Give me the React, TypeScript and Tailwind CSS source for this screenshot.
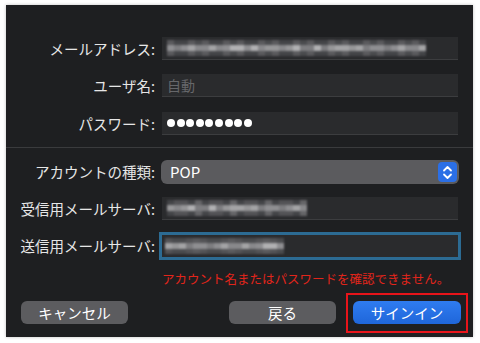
import React from "react";

interface RowProps {
    label: string;
    children: React.ReactNode;
    className?: string;
}

function Row(props: RowProps) {
    return (
        <div className={`flex items-center ${props.className ?? ""}`}>
            <div className="w-[156px] shrink-0 pr-[7px] text-right text-[14.5px] text-[#e6e6e6]">
                {props.label}
            </div>
            {props.children}
        </div>
    );
}

function Field({ children }: { children?: React.ReactNode }) {
    return (
        <div className="relative flex h-[23px] w-[296px] items-center overflow-hidden border-b border-[#3c3d3f] bg-[#2a2b2d] pl-[5px]">
            {children}
        </div>
    );
}

const lightShades = [
    "bg-[#8e8e91]",
    "bg-[#a3a3a5]",
    "bg-[#7d7d80]",
    "bg-[#969698]",
    "bg-[#b0b0b2]",
    "bg-[#88888b]",
];

const darkShades = [
    "bg-[#4a4b4e]",
    "bg-[#5a5a5d]",
    "bg-[#535356]",
    "bg-[#656568]",
    "bg-[#444548]",
];

// pixelated stand-in for hidden text
function Mosaic({ cols, seed }: { cols: number; seed: number }) {
    const rows = [0, 1, 2];
    return (
        <div className="flex flex-col blur-[0.8px]">
            {rows.map((r) => (
                <div key={r} className="flex">
                    {Array.from({ length: cols }).map((_, c) => {
                        const k = c * 7 + r * 5 + seed + ((c * c) % 5);
                        const cls = r === 1 ? lightShades[k % lightShades.length] : darkShades[k % darkShades.length];
                        return <div key={c} className={`w-[7px] ${r === 1 ? "h-[6px]" : "h-[5px]"} ${cls}`} />;
                    })}
                </div>
            ))}
        </div>
    );
}

export default function App() {
    return (
        <div
            className="h-[343px] w-[480px] bg-white pl-[6px] pt-[5px]"
            style={{ fontFamily: '"Noto Sans CJK JP", "Noto Sans", sans-serif' }}
        >
            <div className="flex h-[332px] w-[467px] flex-col bg-[#1e1f21] shadow-[0_0_3px_rgba(0,0,0,0.25)]">
                <Row label="メールアドレス:" className="mt-[32px]">
                    <Field>
                        <Mosaic cols={37} seed={1} />
                    </Field>
                </Row>
                <Row label="ユーザ名:" className="mt-[14px]">
                    <Field>
                        <span className="text-[14px] text-[#66676a]">自動</span>
                    </Field>
                </Row>
                <Row label="パスワード:" className="mt-[15px]">
                    <Field>
                        <div className="flex gap-[1.6px]">
                            {Array.from({ length: 9 }).map((_, i) => (
                                <div key={i} className="h-[8px] w-[8px] rounded-full bg-white" />
                            ))}
                        </div>
                    </Field>
                </Row>

                <div className="mt-[12px] h-px w-full bg-[#3a3b3d]" />

                <Row label="アカウントの種類:" className="mt-[12px]">
                    <div className="-ml-[1px] flex h-[24px] w-[298px] items-center justify-between rounded-[6px] bg-[#5b5b5e] pl-[9px] pr-[2px]">
                        <span className="text-[15px] text-white">POP</span>
                        <div className="flex h-[20px] w-[19px] items-center justify-center rounded-[4px] bg-[#2b6fe6]">
                            <svg width="11" height="15" viewBox="0 0 11 15" fill="none" stroke="white" strokeWidth="1.8" strokeLinecap="round" strokeLinejoin="round">
                                <path d="M2 5.5L5.5 2L9 5.5" />
                                <path d="M2 9.5L5.5 13L9 9.5" />
                            </svg>
                        </div>
                    </div>
                </Row>
                <Row label="受信用メールサーバ:" className="mt-[13px]">
                    <Field>
                        <Mosaic cols={20} seed={4} />
                    </Field>
                </Row>
                <Row label="送信用メールサーバ:" className="mt-[12px]">
                    <div className="-ml-[3px] flex h-[28px] w-[302px] items-center border-[3px] border-[#2c6b93] bg-[#2a2b2d] pl-[3px]">
                        <Mosaic cols={17} seed={2} />
                    </div>
                </Row>

                <div className="mt-[10px] pl-[156px] text-[12.5px] text-[#e2251b]">
                    アカウント名またはパスワードを確認できません。
                </div>

                <div className="mt-[4px] flex items-center pl-[15px]">
                    <button className="h-[23px] w-[107px] rounded-[6px] bg-[#5c5c5f] text-[14.5px] text-white">
                        キャンセル
                    </button>
                    <button className="ml-[101px] h-[23px] w-[107px] rounded-[6px] bg-[#5c5c5f] text-[14.5px] text-white">
                        戻る
                    </button>
                    <div className="ml-[10px] flex h-[40px] w-[122px] items-center justify-center border-2 border-[#e8141a]">
                        <button className="h-[23px] w-[108px] rounded-[6px] bg-gradient-to-b from-[#2f7cf0] to-[#1f66da] text-[14.5px] text-white">
                            サインイン
                        </button>
                    </div>
                </div>
            </div>
        </div>
    );
}
